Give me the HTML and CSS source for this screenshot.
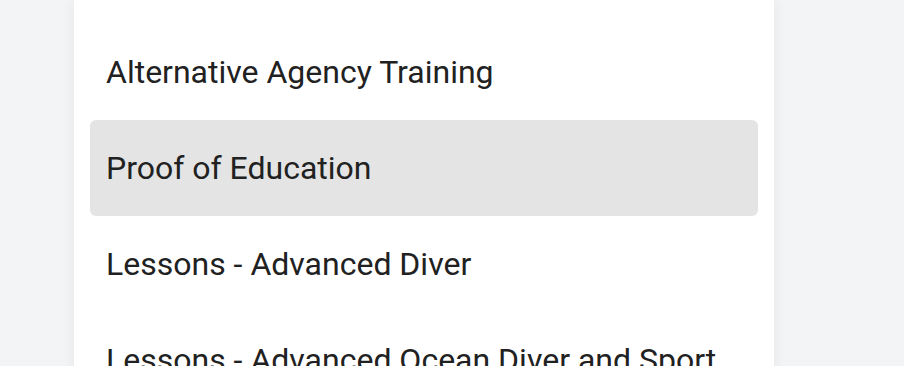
FILE: index.html
```html
<!DOCTYPE html>
<html lang="en">
<head>
<meta charset="utf-8">
<title>Menu</title>
<link rel="stylesheet" href="styles.css">
</head>
<body>
<div class="page">
  <nav class="panel">
    <ul class="menu">
      <li class="item">Alternative Agency Training</li>
      <li class="item active">Proof of Education</li>
      <li class="item">Lessons - Advanced Diver</li>
      <li class="item">Lessons - Advanced Ocean Diver and Sport</li>
    </ul>
  </nav>
</div>
</body>
</html>
```
FILE: styles.css
```css
html, body {
  margin: 0;
  padding: 0;
  background: #f3f4f6;
  height: 100%;
  overflow: hidden;
}
.page {
  padding-left: 74px;
}
.panel {
  width: 700px;
  background: #ffffff;
  box-shadow: 0 0 14px rgba(0, 0, 0, 0.06);
  padding: 24px 16px;
  box-sizing: border-box;
  min-height: 500px;
}
.menu {
  list-style: none;
  margin: 0;
  padding: 0;
}
.item {
  height: 96px;
  display: flex;
  align-items: center;
  padding-left: 16px;
  border-radius: 6px;
  font-family: Roboto, "Noto Sans", sans-serif;
  font-size: 32px;
  color: #212121;
  white-space: nowrap;
}
.item.active {
  background: #e4e4e4;
}
```
